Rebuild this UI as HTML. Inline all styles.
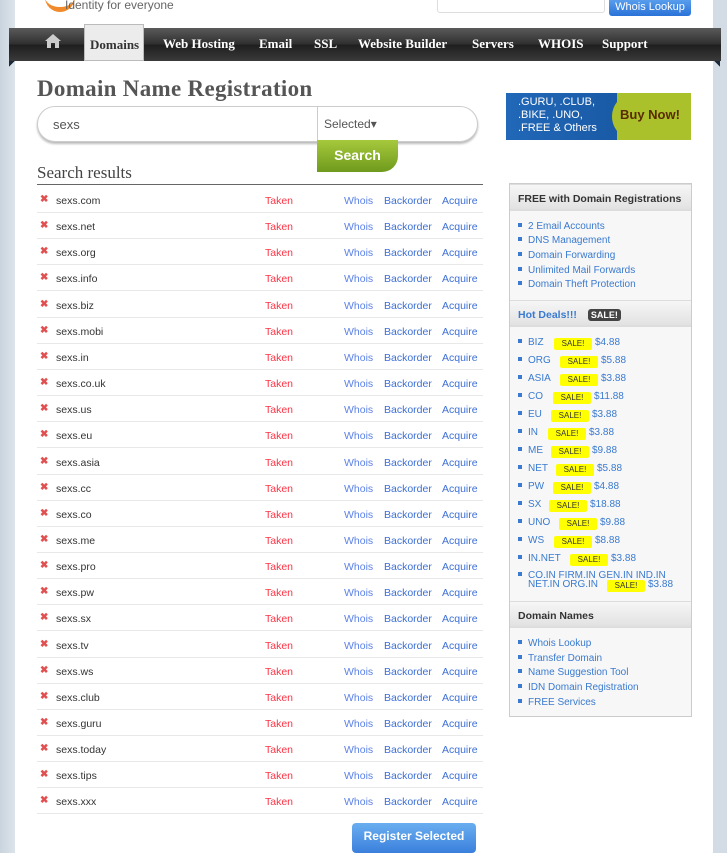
<!DOCTYPE html>
<html><head><meta charset="utf-8"><style>
*{margin:0;padding:0;box-sizing:border-box}
body{width:727px;height:843px;overflow:hidden;background:linear-gradient(90deg,#c9d4de,#dde4ea 15px,#fff 15px,#fff 713px,#d3dce4 713px);font-family:"Liberation Sans",sans-serif;position:relative}
.abs{position:absolute}
.nav{left:9px;top:28px;width:712px;height:33px;background:linear-gradient(#5a5a5a,#2e2e2e 50%,#1e1e1e 51%,#3a3a3a);}
.nav span{position:absolute;top:8px;color:#fff;font-family:"Liberation Serif",serif;font-weight:bold;font-size:13px}
.dom{left:84px;top:24px;width:60px;height:37px;background:#ececec;border:1px solid #bbb}
h1{position:absolute;left:37px;top:76px;font-family:"Liberation Serif",serif;font-size:23px;color:#555;font-weight:bold;letter-spacing:.3px}
.row{position:absolute;left:37px;width:446px;height:26px;border-bottom:1px solid #e8e8e8;font-size:10.5px}
.row b{position:absolute;left:3px;top:7px;color:#e05050;font-size:10px}
.row .n{position:absolute;left:19px;top:8px;color:#333}
.row .t{position:absolute;left:228px;top:8px;color:#ff3344}
.row .w{position:absolute;left:307px;top:8px;color:#5c82e6}
.row .bo{position:absolute;left:347px;top:8px;color:#3c6fd6}
.row .a{position:absolute;left:405px;top:8px;color:#3c6fd6}
.side{left:509px;top:183px;width:183px;height:534px;background:#f7f7f7;border:1px solid #ccc}
.sh{position:absolute;left:0;width:181px;height:27px;background:linear-gradient(#f6f6f6,#e2e2e2);border-bottom:2px solid #ddd;border-top:1px solid #ddd;font-size:10.5px;font-weight:bold;color:#333;padding:8px 0 0 8px;white-space:nowrap}
.li{position:absolute;left:8px;font-size:10px;color:#3a7ad0;white-space:nowrap}
.li:before{content:"";display:inline-block;width:4px;height:4px;background:#3a7ad0;margin-right:6px;vertical-align:2px}
.sale{position:absolute;background:#ff0;font-size:8px;color:#333;width:38px;height:12px;text-align:center;line-height:12px;border-radius:2px}
.pr{position:absolute;font-size:10px;color:#3a7ad0}
</style></head><body>
<div class="abs" style="left:45px;top:-6px;width:30px;height:18px;border-radius:0 0 15px 15px;border-bottom:5px solid #f08a2a"></div>
<div class="abs" style="left:65px;top:-2px;font-size:12px;color:#666">Identity for everyone</div>
<div class="abs" style="left:437px;top:-2px;width:168px;height:15px;border:1px solid #ddd;border-radius:3px;background:#fff"></div>
<div class="abs" style="left:609px;top:-2px;width:82px;height:18px;background:linear-gradient(#5ea3ef,#2a72d8);border-radius:3px;color:#fff;font-size:11px;text-align:center;padding-top:3px">Whois Lookup</div>
<div class="abs nav"></div>
<div class="abs dom"></div>
<div class="abs" style="left:9px;top:61px;width:6px;height:6px;background:linear-gradient(135deg,#1d2a3a 50%,transparent 50%)"></div>
<div class="abs" style="left:714px;top:61px;width:6px;height:6px;background:linear-gradient(225deg,#1d2a3a 50%,transparent 50%)"></div>
<svg class="abs" style="left:45px;top:34px" width="16" height="14" viewBox="0 0 16 14"><path d="M8 0L0 7h2v7h4V9h4v5h4V7h2z" fill="#ccc"/></svg>
<div class="abs nav" style="background:none"><span style="left:81px;top:9px;color:#333">Domains</span><span style="left:154px">Web Hosting</span><span style="left:250px">Email</span><span style="left:305px">SSL</span><span style="left:349px">Website Builder</span><span style="left:463px">Servers</span><span style="left:529px">WHOIS</span><span style="left:593px">Support</span></div>
<h1>Domain Name Registration</h1>
<div class="abs" style="left:37px;top:106px;width:441px;height:36px;border:1px solid #ccc;border-radius:18px;background:#fff;box-shadow:0 2px 2px #bbb"></div>
<div class="abs" style="left:317px;top:106px;width:1px;height:36px;background:#ccc"></div>
<div class="abs" style="left:53px;top:117px;font-size:13px;color:#555">sexs</div>
<div class="abs" style="left:324px;top:117px;font-size:12px;color:#555">Selected&#9662;</div>
<div class="abs" style="left:317px;top:140px;width:81px;height:32px;background:linear-gradient(#a6c93c,#6f9a1d);border-radius:0 0 16px 0;color:#fff;font-weight:bold;font-size:14px;text-align:center;padding-top:7px">Search</div>
<div class="abs" style="left:37px;top:163px;font-family:'Liberation Serif',serif;font-size:17px;color:#444">Search results</div>
<div class="abs" style="left:37px;top:184px;width:446px;height:1px;background:#666"></div>
<div id="rows"></div>
<div class="abs" style="left:352px;top:823px;width:124px;height:30px;background:linear-gradient(#6aaef0,#3a80dc);border-radius:4px;color:#fff;font-weight:bold;font-size:12px;text-align:center;padding-top:6px">Register Selected</div>
<div class="abs" style="left:506px;top:93px;width:185px;height:47px;background:linear-gradient(90deg,#2168b8,#1a5aa6 60%,#a9c12a 60%);color:#fff;font-size:11px;line-height:13px;padding:3px 0 0 12px">.GURU, .CLUB,<br>.BIKE, .UNO,<br>.FREE &amp; Others</div>
<div class="abs" style="left:612px;top:93px;width:79px;height:47px;background:#aac12c;border-radius:24px 0 0 24px;color:#5a2a00;font-weight:bold;font-size:13px;padding:14px 0 0 8px">Buy Now!</div>
<div class="abs side">
<div class="sh" style="top:0">FREE with Domain Registrations</div>
<div class="li" style="top:37px">2 Email Accounts</div>
<div class="li" style="top:51px">DNS Management</div>
<div class="li" style="top:66px">Domain Forwarding</div>
<div class="li" style="top:81px">Unlimited Mail Forwards</div>
<div class="li" style="top:95px">Domain Theft Protection</div>
<div class="sh" style="top:116px;color:#3a7ad0">Hot Deals!!! <span style="background:#444;color:#fff;border-radius:3px;padding:1px 3px;font-size:9px;margin-left:8px">SALE!</span></div>
<div id="deals"></div>
<div class="sh" style="top:417px">Domain Names</div>
<div class="li" style="top:454px">Whois Lookup</div>
<div class="li" style="top:469px">Transfer Domain</div>
<div class="li" style="top:483px">Name Suggestion Tool</div>
<div class="li" style="top:498px">IDN Domain Registration</div>
<div class="li" style="top:513px">FREE Services</div>
</div>
<script>
var t=["com","net","org","info","biz","mobi","in","co.uk","us","eu","asia","cc","co","me","pro","pw","sx","tv","ws","club","guru","today","tips","xxx"],h="";
t.forEach(function(x,i){h+='<div class="row" style="top:'+(187+i*26.15)+'px"><b>&#10006;</b><span class="n">sexs.'+x+'</span><span class="t">Taken</span><span class="w">Whois</span><span class="bo">Backorder</span><span class="a">Acquire</span></div>'});
document.getElementById("rows").innerHTML=h;
var d=[["BIZ",44,"$4.88"],["ORG",50,"$5.88"],["ASIA",50,"$3.88"],["CO",43,"$11.88"],["EU",41,"$3.88"],["IN",38,"$3.88"],["ME",41,"$9.88"],["NET",46,"$5.88"],["PW",43,"$4.88"],["SX",39,"$18.88"],["UNO",49,"$9.88"],["WS",44,"$8.88"],["IN.NET",60,"$3.88"]],g="";
d.forEach(function(x,i){var y=153+i*18;g+='<div class="li" style="top:'+y+'px">'+x[0]+'</div><div class="sale" style="left:'+x[1]+'px;top:'+(y+1)+'px">SALE!</div><div class="pr" style="left:'+(x[1]+41)+'px;top:'+y+'px">'+x[2]+'</div>'});
g+='<div class="li" style="top:387px;line-height:9px">CO.IN FIRM.IN GEN.IN IND.IN<br><span style="margin-left:10px">NET.IN ORG.IN</span></div><div class="sale" style="left:97px;top:396px">SALE!</div><div class="pr" style="left:138px;top:395px">$3.88</div>';
document.getElementById("deals").innerHTML=g;
</script>
</body></html>
